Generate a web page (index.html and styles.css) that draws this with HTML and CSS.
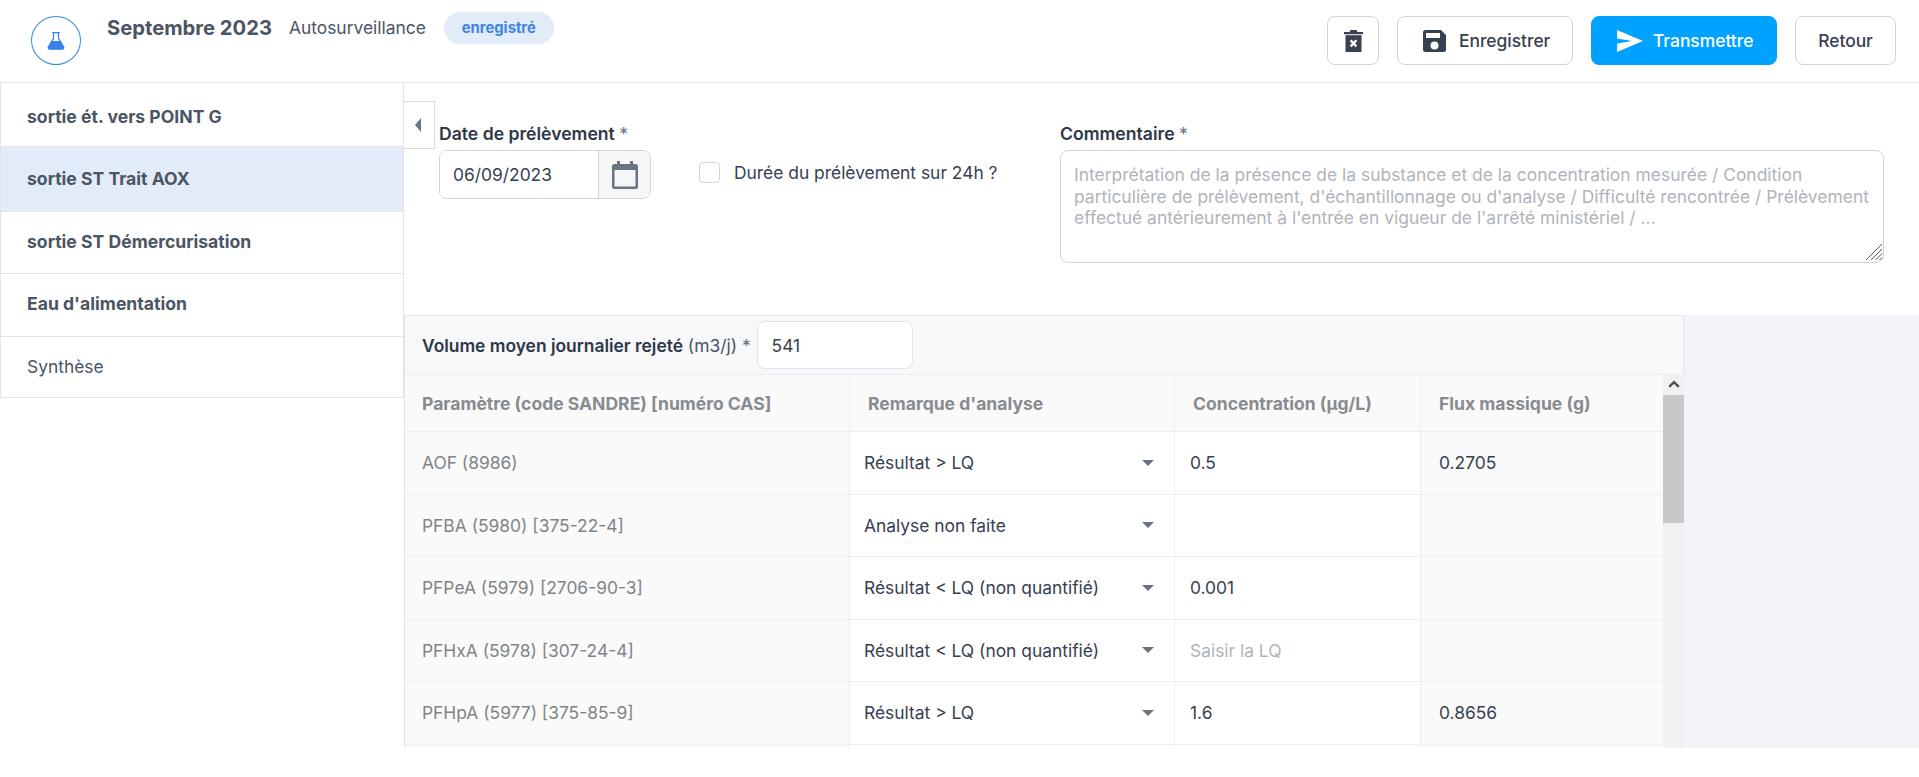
FILE: index.html
```html
<!DOCTYPE html>
<html lang="fr">
<head>
<meta charset="utf-8">
<title>Septembre 2023 - Autosurveillance</title>
<link rel="stylesheet" href="styles.css">
</head>
<body>
<header class="topbar">
  <div class="brand">
    <span class="logo">
      <svg width="18" height="18" viewBox="0 0 18 18"><path class="flask-line" d="M5.2 .7h7.6M6.5 .7v5.6L1.6 14.6a1.5 1.5 0 0 0 1.3 2.4h12.2a1.5 1.5 0 0 0 1.3-2.4L11.5 6.3V.7"/><path class="flask-fill" d="M4.7 9h8.6l3.6 5.7a1.6 1.6 0 0 1-1.4 2.6H2.5a1.6 1.6 0 0 1-1.4-2.6z"/></svg>
    </span>
    <h1 class="period">Septembre 2023</h1>
    <span class="kind">Autosurveillance</span>
    <span class="badge">enregistré</span>
  </div>
  <div class="actions">
    <button class="btn btn-icon" aria-label="Supprimer">
      <svg width="19" height="22" viewBox="0 0 19 22"><path class="dark" d="M6.5 0h6l1 2H19v2.2H0V2h5.5z"/><path class="dark" d="M1.5 5.2h16V22h-16z"/><path class="cross" d="M6.6 10.2l5.8 6.2M12.4 10.2l-5.8 6.2"/></svg>
    </button>
    <button class="btn btn-save">
      <svg width="23" height="22" viewBox="0 0 23 22"><path class="dark" fill-rule="evenodd" d="M2.5 0H18l5 5v14.5a2.5 2.5 0 0 1-2.5 2.5h-18A2.5 2.5 0 0 1 0 19.500V2.500A2.500 2.500 0 0 1 2.500 0zM3 3v5h14V3zM11.500 11.500a4 4 0 1 0 0 8 4 4 0 0 0 0-8z"/></svg>
      <span>Enregistrer</span>
    </button>
    <button class="btn btn-send">
      <svg width="26" height="22" viewBox="0 0 26 22"><path class="white" d="M0 0l26 11L0 22l.1-8.500L15 11 .1 8.500z"/></svg>
      <span>Transmettre</span>
    </button>
    <button class="btn btn-back">Retour</button>
  </div>
</header>

<div class="layout">
  <nav class="sidebar">
    <a class="nav-item nav-a strong">sortie ét. vers POINT G</a>
    <a class="nav-item nav-b strong active">sortie ST Trait AOX</a>
    <a class="nav-item nav-c strong">sortie ST Démercurisation</a>
    <a class="nav-item nav-d strong">Eau d'alimentation</a>
    <a class="nav-item nav-e">Synthèse</a>
  </nav>

  <main class="content">
    <button class="collapse" aria-label="Replier"><span class="tri-left"></span></button>

    <section class="form">
      <div class="field-date">
        <label class="label">Date de prélèvement <span class="req">*</span></label>
        <div class="date-group">
          <input class="date-input" type="text" value="06/09/2023">
          <span class="date-addon">
            <svg width="26" height="28" viewBox="0 0 26 28"><path class="cal" fill-rule="evenodd" d="M5 0h3v3h10V0h3v3h2.500A2.500 2.500 0 0 1 26 5.500v20a2.500 2.500 0 0 1-2.500 2.500h-21A2.500 2.500 0 0 1 0 25.500v-20A2.500 2.500 0 0 1 2.500 3H5zM2.500 9v16.500h21V9z"/></svg>
          </span>
        </div>
      </div>
      <label class="check">
        <input class="check-box" type="checkbox">
        <span>Durée du prélèvement sur 24h ?</span>
      </label>
      <div class="field-comment">
        <label class="label">Commentaire <span class="req">*</span></label>
        <div class="comment-box">
          <textarea class="comment" placeholder="Interprétation de la présence de la substance et de la concentration mesurée / Condition particulière de prélèvement, d'échantillonnage ou d'analyse / Difficulté rencontrée / Prélèvement effectué antérieurement à l'entrée en vigueur de l'arrêté ministériel / ..."></textarea>
          <svg class="grip" width="18" height="18" viewBox="0 0 18 18"><path class="grip-line" d="M1 17L17 1M6 17L17 6M10.500 17L17 10.500M14.500 17l2.500-2.500"/></svg>
        </div>
      </div>
    </section>

    <section class="data">
      <div class="panel">
        <div class="volume">
          <span class="volume-label"><b>Volume moyen journalier rejeté</b> (m3/j) <span class="req">*</span></span>
          <input class="volume-input" type="text" value="541">
        </div>
        <div class="table-wrap">
          <div class="table">
            <div class="row head">
              <div class="cell c1">Paramètre (code SANDRE) [numéro CAS]</div>
              <div class="cell c2">Remarque d'analyse</div>
              <div class="cell c3">Concentration (µg/L)</div>
              <div class="cell c4">Flux massique (g)</div>
            </div>
            <div class="row">
              <div class="cell c1">AOF (8986)</div>
              <div class="cell c2"><span class="select">Résultat &gt; LQ<i class="caret"></i></span></div>
              <div class="cell c3">0.5</div>
              <div class="cell c4">0.2705</div>
            </div>
            <div class="row">
              <div class="cell c1">PFBA (5980) [375-22-4]</div>
              <div class="cell c2"><span class="select">Analyse non faite<i class="caret"></i></span></div>
              <div class="cell c3"></div>
              <div class="cell c4"></div>
            </div>
            <div class="row">
              <div class="cell c1">PFPeA (5979) [2706-90-3]</div>
              <div class="cell c2"><span class="select">Résultat &lt; LQ (non quantifié)<i class="caret"></i></span></div>
              <div class="cell c3">0.001</div>
              <div class="cell c4"></div>
            </div>
            <div class="row">
              <div class="cell c1">PFHxA (5978) [307-24-4]</div>
              <div class="cell c2"><span class="select">Résultat &lt; LQ (non quantifié)<i class="caret"></i></span></div>
              <div class="cell c3 hint">Saisir la LQ</div>
              <div class="cell c4"></div>
            </div>
            <div class="row">
              <div class="cell c1">PFHpA (5977) [375-85-9]</div>
              <div class="cell c2"><span class="select">Résultat &gt; LQ<i class="caret"></i></span></div>
              <div class="cell c3">1.6</div>
              <div class="cell c4">0.8656</div>
            </div>
            <div class="row">
              <div class="cell c1"></div>
              <div class="cell c2"></div>
              <div class="cell c3"></div>
              <div class="cell c4"></div>
            </div>
          </div>
          <div class="scrollbar">
            <span class="sb-up"><svg width="12" height="8" viewBox="0 0 12 8"><path class="chev" d="M1.200 6.800L6 2.200l4.800 4.600"/></svg></span>
            <span class="sb-thumb"></span>
          </div>
        </div>
      </div>
      <div class="aside-fill"></div>
    </section>
  </main>
</div>
</body>
</html>
```

FILE: styles.css
```css
* { box-sizing: border-box; }
html, body { margin: 0; height: 777px; overflow: hidden; background: #fff; }
body { font-family: Inter, "Liberation Sans", sans-serif; font-size: 17.400px; color: #374151; }

/* top bar */
.topbar { height: 83px; border-bottom: 1px solid #e9ebee; display: flex; justify-content: space-between; padding: 16px 23px 0 31px; }
.brand { display: flex; align-items: flex-start; }
.logo { width: 50px; height: 49px; border: 1px solid #2f8be6; border-radius: 50%; display: flex; align-items: center; justify-content: center; margin-right: 26px; }
.flask-line { fill: none; stroke: #3b82e6; stroke-width: 1.300; }
.flask-fill { fill: #3b82e6; }
.period { margin: 0 17px 0 0; font-size: 20.200px; line-height: 24px; font-weight: 700; color: #4b5563; }
.kind { line-height: 24px; margin-right: 18px; color: #4b5563; }
.badge { margin-top: -4px; height: 32px; width: 110px; border-radius: 16px; background: #e2ebf8; color: #4285e0; font-size: 14.800px; font-weight: 700; display: flex; align-items: center; justify-content: center; }

.actions { display: flex; gap: 18px; }
.btn { height: 49px; border: 1px solid #d1d5db; border-radius: 8px; background: #fff; color: #374151; font: 500 17.400px Inter, "Liberation Sans", sans-serif; display: flex; align-items: center; padding: 0; }
.btn-icon { width: 52px; justify-content: center; }
.btn-save { width: 176px; padding-left: 25px; gap: 13px; }
.btn-send { width: 186px; padding-left: 25px; gap: 10px; background: #00a2ff; border-color: #00a2ff; color: #fff; }
.btn-back { width: 101px; justify-content: center; }
.dark { fill: #374151; }
.white { fill: #fff; }
.cross { stroke: #fff; stroke-width: 2.400; fill: none; }

/* main layout */
.layout { display: flex; height: 694px; }
.sidebar { width: 404px; flex: none; align-self: flex-start; border-left: 1px solid #e1e4e9; border-right: 1px solid #e1e4e9; }
.nav-item { display: flex; align-items: center; padding-left: 26px; border-bottom: 1px solid #e1e4e9; color: #4b5563; }
.strong { font-weight: 700; font-size: 17.600px; }
.nav-a { height: 64px; padding-top: 3px; }
.nav-b { height: 65px; padding-bottom: 1px; }
.nav-c { height: 62px; padding-bottom: 2px; }
.nav-d { height: 63px; padding-bottom: 3px; }
.nav-e { height: 61px; padding-bottom: 2px; }
.active { background: #e2ebf8; }

.content { flex: 1; min-width: 0; position: relative; }
.collapse { position: absolute; left: 0; top: 18px; width: 31px; height: 48px; background: #fff; border: 1px solid #d8dbe0; border-left: 0; padding: 0; display: flex; align-items: center; justify-content: center; }
.tri-left { width: 0; height: 0; border-style: solid; border-width: 7px 6px 7px 0; border-color: transparent #6b7280 transparent transparent; margin-right: 2px; margin-top: -1px; }

/* form */
.form { height: 232px; padding: 39px 35px 0 35px; display: flex; }
.label { display: block; line-height: 24px; margin-bottom: 4px; font-size: 17.600px; font-weight: 600; color: #2d3748; }
.req { color: #6b7280; font-weight: 400; }
.field-date { width: 212px; flex: none; }
.date-group { height: 49px; display: flex; border: 1px solid #d1d5db; border-radius: 8px; overflow: hidden; }
.date-input { width: 159px; border: 0; outline: 0; padding: 0 0 0 13px; font: 400 17.400px Inter, "Liberation Sans", sans-serif; color: #374151; border-right: 1px solid #d1d5db; }
.date-addon { flex: 1; background: #f5f6f8; display: flex; align-items: center; justify-content: center; }
.cal { fill: #6b7280; }
.check { display: flex; gap: 14px; align-items: center; height: 21px; margin: 40px 0 0 48px; color: #374151; width: 313px; flex: none; white-space: nowrap; }
.check-box { appearance: none; width: 21px; height: 21px; margin: 0; border: 1px solid #d1d5db; border-radius: 4px; background: #fff; flex: none; }
.field-comment { width: 824px; flex: none; margin-left: 48px; }
.comment-box { position: relative; height: 113px; }
.comment { display: block; width: 824px; height: 113px; border: 1px solid #d1d5db; border-radius: 8px; padding: 13px 10px 13px 13px; font: 400 17.450px/21.500px Inter, "Liberation Sans", sans-serif; color: #374151; outline: 0; resize: none; }
.comment::placeholder { color: #b0b4ba; opacity: 1; }
.grip { position: absolute; right: 1px; bottom: 2px; pointer-events: none; }
.grip-line { fill: none; stroke: #555b63; stroke-width: 1; }

/* data */
.data { display: flex; height: 433px; }
.panel { width: 1280px; flex: none; display: flex; flex-direction: column; border-left: 1px solid #e1e4e9; }
.volume { height: 60px; flex: none; display: flex; align-items: center; padding-left: 17px; gap: 6px; background: #f7f8fa; border-top: 1px solid #e5e7eb; border-right: 1px solid #e1e4e9; border-bottom: 1px solid #eceef0; }
.volume-label { color: #4b5563; white-space: nowrap; }
.volume-label b { font-weight: 600; color: #2d3748; }
.volume-input { width: 156px; height: 48px; border: 1px solid #e1e4e9; border-radius: 8px; padding: 0 0 0 14px; font: 400 17.400px Inter, "Liberation Sans", sans-serif; color: #374151; outline: 0; background: #fff; }
.table-wrap { flex: 1; min-height: 0; display: flex; overflow: hidden; }
.table { flex: 1; min-width: 0; }
.row { display: grid; grid-template-columns: 445px 325px 246px 1fr; height: 62.500px; }
.row.head { height: 57px; font-weight: 700; font-size: 17.550px; }
.cell { display: flex; align-items: center; border-right: 1px solid #eceeef; border-bottom: 1px solid #eceeef; white-space: nowrap; }
.c1 { padding-left: 17px; background: #fafafa; color: #808488; }
.c2 { padding: 0 10px 0 14px; }
.c3 { padding-left: 15px; }
.c4 { padding-left: 18px; background: #fafafa; border-right: 0; }
.head .cell { background: #fafafa; color: #888b8f; }
.head .c2, .head .c3 { padding-left: 18px; }
.hint { color: #b0b4ba; }
.select { flex: 1; display: flex; justify-content: space-between; align-items: center; padding-right: 10px; }
.caret { width: 0; height: 0; border-style: solid; border-width: 6px 6.500px 0; border-color: #6b7280 transparent transparent; }
.scrollbar { width: 21px; flex: none; background: #f1f1f1; display: flex; flex-direction: column; }
.sb-up { height: 20px; padding-bottom: 3px; display: flex; align-items: center; justify-content: center; }
.chev { fill: none; stroke: #505050; stroke-width: 2.400; }
.sb-thumb { height: 128px; background: #c8c8c8; }
.aside-fill { flex: 1; background: #f1f3f8; }
```
